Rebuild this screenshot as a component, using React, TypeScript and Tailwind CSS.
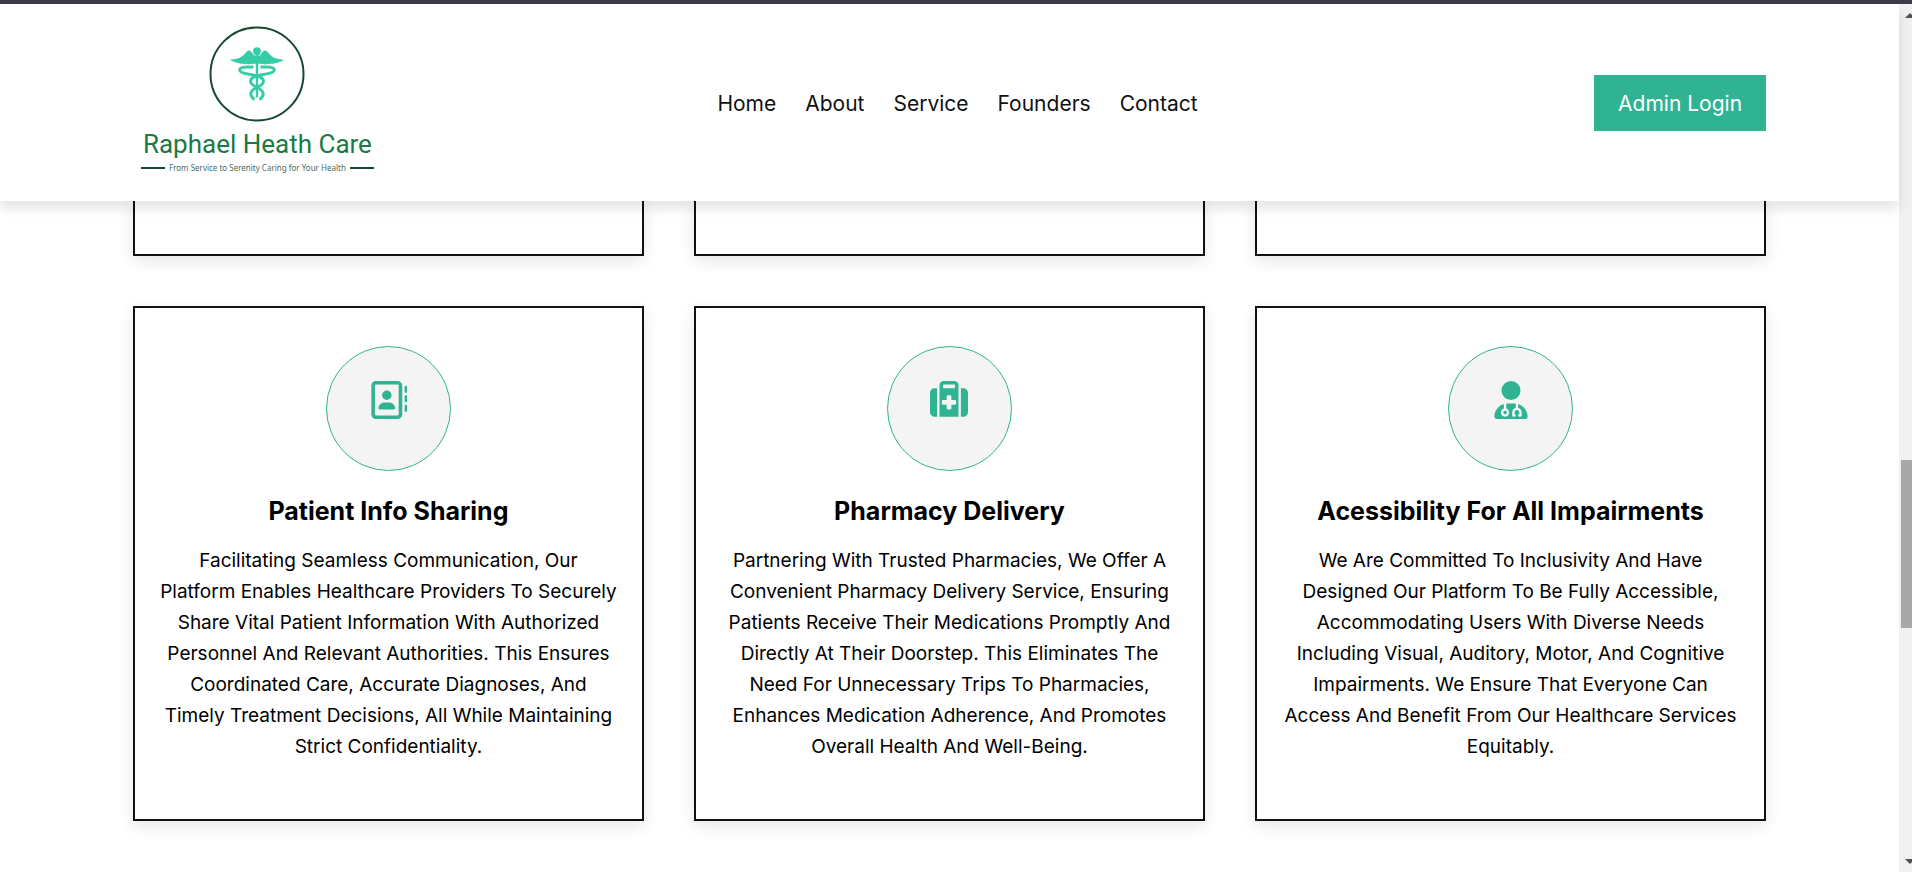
import { FaRegAddressBook, FaSuitcaseMedical, FaUserDoctor } from "react-icons/fa6";
import type { IconType } from "react-icons";

type Service = { title: string; text: string; Icon: IconType };

const navItems = ["Home", "About", "Service", "Founders", "Contact"];

const services: Service[] = [
  {
    title: "Patient Info Sharing",
    text: "Facilitating Seamless Communication, Our Platform Enables Healthcare Providers To Securely Share Vital Patient Information With Authorized Personnel And Relevant Authorities. This Ensures Coordinated Care, Accurate Diagnoses, And Timely Treatment Decisions, All While Maintaining Strict Confidentiality.",
    Icon: FaRegAddressBook,
  },
  {
    title: "Pharmacy Delivery",
    text: "Partnering With Trusted Pharmacies, We Offer A Convenient Pharmacy Delivery Service, Ensuring Patients Receive Their Medications Promptly And Directly At Their Doorstep. This Eliminates The Need For Unnecessary Trips To Pharmacies, Enhances Medication Adherence, And Promotes Overall Health And Well-Being.",
    Icon: FaSuitcaseMedical,
  },
  {
    title: "Acessibility For All Impairments",
    text: "We Are Committed To Inclusivity And Have Designed Our Platform To Be Fully Accessible, Accommodating Users With Diverse Needs Including Visual, Auditory, Motor, And Cognitive Impairments. We Ensure That Everyone Can Access And Benefit From Our Healthcare Services Equitably.",
    Icon: FaUserDoctor,
  },
];

function Emblem() {
  return (
    <svg viewBox="0 0 96 96" className="size-24" aria-hidden="true">
      <circle cx="48" cy="48" r="46.5" fill="none" stroke="#17492f" strokeWidth="2" />
      <g fill="#34cda6">
        <circle cx="48" cy="25.200" r="3.900" />
        <path d="M46.500 29.500 Q45 30 44 28 Q42.500 25.500 40 24.300 Q38.500 24.500 36.500 27 Q33 31.500 27.500 32.800 L21.300 33.800 Q22 35.500 25.500 35.800 Q26.500 37.200 29.500 36.800 Q31 38.300 33.500 37.400 Q35.500 38.800 37.500 37.700 Q39.500 39 41.500 37.800 Q43.500 38.800 45.500 37.500 L48 38.300 L50.500 37.500 Q52.500 38.800 54.500 37.800 Q56.500 39 58.500 37.700 Q60.500 38.800 62.500 37.400 Q65 38.300 66.500 36.800 Q69.500 37.200 70.500 35.800 Q74 35.500 74.700 33.800 L68.500 32.800 Q63 31.500 59.500 27 Q57.500 24.500 56 24.300 Q53.500 25.500 52 28 Q51 30 49.500 29.500 Z" />
        <rect x="46.800" y="28" width="2.400" height="43.500" rx="1" />
      </g>
      <g fill="none" stroke="#34cda6" strokeWidth="2.900">
        <path d="M44.500 41 H38 C29 41 28.500 45.500 36 47.400 C43 49.200 54.500 49.500 54.500 55.300 C54.500 61.500 41.800 61 41.800 67.800 C41.800 70.500 43.200 72 45.500 73.500" />
        <path d="M51.500 41 H58 C67 41 67.500 45.500 60 47.400 C53 49.200 41.500 49.500 41.500 55.300 C41.500 61.500 54.200 61 54.200 67.800 C54.200 70.500 52.800 72 50.500 73.500" />
      </g>
    </svg>
  );
}

function Logo() {
  return (
    <a href="#home" className="mb-1.5 ml-2 flex flex-col items-center justify-self-start">
      <Emblem />
      <span className="mt-1 px-0.5 font-['Roboto',sans-serif] text-[26px] leading-9 whitespace-nowrap text-[#1b7a43]">
        Raphael Heath Care
      </span>
      <span className="flex w-full items-center justify-between gap-1">
        <span className="h-0.5 flex-1 bg-[#17492f]" />
        <span className="font-['Noto_Sans',sans-serif] text-[8px] leading-3 whitespace-nowrap text-[#4b6b5b]">
          From Service to Serenity Caring for Your Health
        </span>
        <span className="h-0.5 flex-1 bg-[#17492f]" />
      </span>
    </a>
  );
}

function Header() {
  return (
    <header className="relative z-10 grid h-[197px] shrink-0 grid-cols-[1fr_auto_1fr] items-center bg-white px-[7%] shadow-[0_8px_11px_rgba(0,0,0,0.1)]">
      <Logo />
      <nav className="ml-4 flex gap-[29px] pt-0.5">
        {navItems.map((item) => (
          <a key={item} href={`#${item.toLowerCase()}`} className="text-[21px] leading-8 text-[#111]">
            {item}
          </a>
        ))}
      </nav>
      <button type="button" className="h-14 justify-self-end bg-[#2fb393] px-6 pt-0.5 text-[21px] text-white">
        Admin Login
      </button>
    </header>
  );
}

const cardFrame = "border-2 border-[#111] bg-white shadow-[0_5px_15px_rgba(0,0,0,0.1)]";

function ServiceCard({ title, text, Icon }: Service) {
  return (
    <article className={`${cardFrame} flex flex-col items-center px-[25px] pt-[38px] pb-[57px] text-center`}>
      <div className="flex size-[125px] justify-center rounded-full border border-[#2fb393] bg-[#f4f4f4] pt-[34px]">
        <Icon className="size-[38px] text-[#2fb393]" aria-hidden="true" />
      </div>
      <h3 className="mt-5 text-[25px] leading-10 font-bold text-black">{title}</h3>
      <p className="mt-3.5 text-[19px] leading-[31px] text-black">{text}</p>
    </article>
  );
}

function ScrollRail() {
  return (
    <div className="flex w-[13px] shrink-0 flex-col overflow-hidden bg-[#f0f0f0]" aria-hidden="true">
      <svg viewBox="0 0 13 18" className="h-[18px] w-[13px]">
        <path d="M6 14 L11 9 L16 14 Z" fill="#505050" />
      </svg>
      <div className="grow-[438]" />
      <div className="ml-0.5 grow-[168] bg-[#a8a8a8]" />
      <div className="grow-[226]" />
      <svg viewBox="0 0 13 18" className="h-[18px] w-[13px]">
        <path d="M6 5 L11 10 L16 5 Z" fill="#505050" />
      </svg>
    </div>
  );
}

export default function App() {
  return (
    <div className="flex h-screen flex-col overflow-hidden bg-white font-['Inter',sans-serif]">
      <div className="h-1 shrink-0 bg-[#3b3a47]" />
      <div className="flex min-h-0 flex-1">
        <div className="flex min-w-0 flex-1 flex-col">
          <Header />
          <main className="px-[7%]">
            <div className="grid grid-cols-3 gap-x-[50px]">
              {services.map((service) => (
                <div key={service.title} className={`${cardFrame} h-[55px] border-t-0`} />
              ))}
            </div>
            <section className="mt-[50px] grid grid-cols-3 gap-[50px]">
              {services.map((service) => (
                <ServiceCard key={service.title} {...service} />
              ))}
            </section>
          </main>
        </div>
        <ScrollRail />
      </div>
    </div>
  );
}
